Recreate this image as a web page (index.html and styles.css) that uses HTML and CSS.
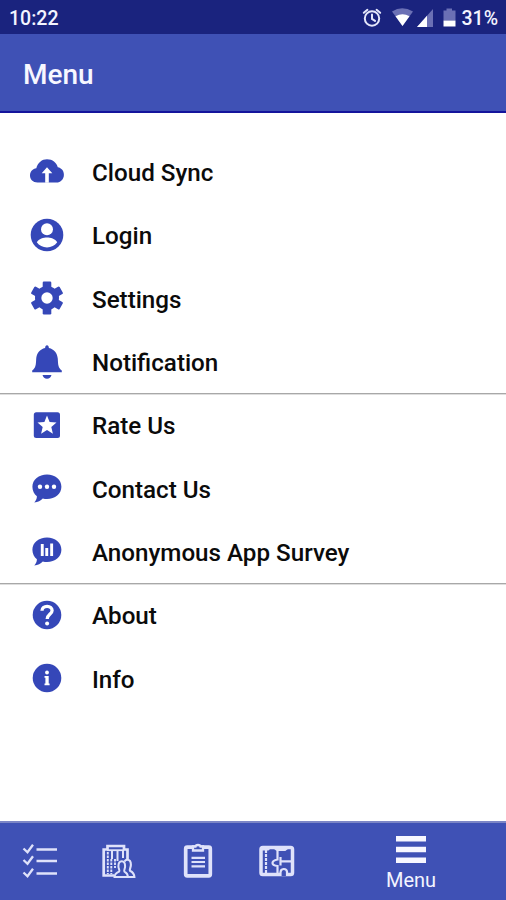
FILE: index.html
```html
<!DOCTYPE html>
<html lang="en">
<head>
    <meta charset="UTF-8">
    <meta name="viewport" content="width=device-width, initial-scale=1.0">
    <title>Menu</title>
    <link rel="stylesheet" href="styles.css">
</head>
<body>
    <!-- Status bar -->
    <div class="status-bar">
        <span class="time">10:22</span>
        <svg class="status-icons" width="96" height="34" viewBox="0 0 96 34">
            <g fill="none" stroke="#e4e6fa" stroke-width="2" stroke-linecap="round">
                <circle cx="12" cy="18.500" r="7.200"/>
                <path d="M3.800 12.800l3.600-3M20.200 12.800l-3.600-3M12 14.500v4.400l3 2"/>
            </g>
            <path d="M32 11.500q10-6.500 21 0L42.500 26z" fill="#6b70b5"/>
            <path d="M35.500 16.300q7-4 14 0L42.500 26z" fill="#fff"/>
            <path d="M73 9v18H57z" fill="#6b70b5"/>
            <path d="M67 15.800V27H57z" fill="#fff"/>
            <path d="M86.500 8.500h5.500v2h3.500v10h-12v-10h3z" fill="#6b70b5"/>
            <path d="M83.500 20.500h12V26.500h-12z" fill="#fff"/>
        </svg>
        <span class="battery">31%</span>
    </div>

    <div class="header">
        <h1>Menu</h1>
    </div>

    <!-- Menu entries -->
    <div class="menu">
        <ul class="menu-group">
            <li class="menu-item">
                <svg class="menu-icon" viewBox="0 0 40 40">
                    <path d="M10.500 30.500C6 30.500 3 27.500 3 23.500c0-4 2.800-6.700 6.300-7.200C10.700 10.500 15 7.200 20 7.200c5.600 0 9.500 3.300 10.800 8 3.800.6 6.100 3.700 6.100 7.500 0 4.500-3.200 7.800-7.500 7.800z"/>
                    <path class="cut" d="M20 15.200l5.300 6h-3.500v9.500h-3.600v-9.500h-3.500z"/>
                </svg>
                <span>Cloud Sync</span>
            </li>
            <li class="menu-item">
                <svg class="menu-icon" viewBox="0 0 40 40">
                    <circle cx="20" cy="20" r="16.300"/>
                    <circle class="cut" cx="20" cy="14.300" r="6"/>
                    <path class="cut" d="M9.800 27.300c2-3.400 6.800-4.700 10.200-4.700s8.200 1.300 10.200 4.700c-2.300 3.300-6 5.200-10.200 5.200s-7.900-1.900-10.200-5.200z"/>
                </svg>
                <span>Login</span>
            </li>
            <li class="menu-item">
                <svg class="menu-icon" viewBox="0 0 40 40">
                    <circle cx="20" cy="20" r="12"/>
                    <rect x="15.700" y="3.600" width="8.600" height="32.800" rx="1.200"/>
                    <rect x="15.700" y="3.600" width="8.600" height="32.800" rx="1.200" transform="rotate(60 20 20)"/>
                    <rect x="15.700" y="3.600" width="8.600" height="32.800" rx="1.200" transform="rotate(120 20 20)"/>
                    <circle class="cut" cx="20" cy="20" r="5.700"/>
                </svg>
                <span>Settings</span>
            </li>
            <li class="menu-item">
                <svg class="menu-icon" viewBox="0 0 40 40">
                    <path d="M20 3.300c1.200 0 1.700.8 1.900 2.600 5.200 1.200 8.600 5.400 8.900 10.900.3 6 .3 9 4 11.700v1.700H5.200v-1.700c3.700-2.700 3.700-5.700 4-11.700.3-5.500 3.700-9.700 8.900-10.900.2-1.800.7-2.600 1.900-2.600z"/>
                    <path d="M15.500 33h9c-.6 2.300-2.200 3.700-4.500 3.700s-3.900-1.400-4.500-3.700z"/>
                </svg>
                <span>Notification</span>
            </li>
        </ul>

        <ul class="menu-group">
            <li class="menu-item">
                <svg class="menu-icon" viewBox="0 0 40 40">
                    <rect x="6.800" y="7.300" width="26.200" height="25.700" rx="2.500"/>
                    <path class="cut" d="M20 10.500l2.600 6.400 6.900.6-5.200 4.500 1.600 6.700-5.900-3.600-5.900 3.600 1.600-6.700-5.200-4.500 6.900-.6z"/>
                </svg>
                <span>Rate Us</span>
            </li>
            <li class="menu-item">
                <svg class="menu-icon" viewBox="0 0 40 40">
                    <path d="M20 6.500c8.200 0 14.400 5.200 14.400 12.200S28.200 31 20 31c-1.600 0-2.900-.1-4.200-.5-2.200 2.200-4.800 3.600-8.500 4 1.700-1.900 2.600-3.700 2.600-6.200-2.700-2.300-4.500-5.600-4.500-9.600C5.400 11.700 11.800 6.500 20 6.500z"/>
                    <circle class="cut" cx="13" cy="18.800" r="2.200"/>
                    <circle class="cut" cx="20" cy="18.800" r="2.200"/>
                    <circle class="cut" cx="27" cy="18.800" r="2.200"/>
                </svg>
                <span>Contact Us</span>
            </li>
            <li class="menu-item">
                <svg class="menu-icon" viewBox="0 0 40 40">
                    <path d="M20 6.500c8.200 0 14.400 5.200 14.400 12.200S28.200 31 20 31c-1.600 0-2.900-.1-4.200-.5-2.200 2.200-4.800 3.600-8.500 4 1.700-1.900 2.600-3.700 2.600-6.200-2.700-2.300-4.500-5.600-4.500-9.600C5.400 11.700 11.800 6.500 20 6.500z"/>
                    <path class="cut" d="M13.800 13h2.900v12h-2.900zM18.300 17h2.900v8h-2.900zM23.200 12.500h2.900V25h-2.900z"/>
                </svg>
                <span>Anonymous App Survey</span>
            </li>
        </ul>

        <ul class="menu-group">
            <li class="menu-item">
                <svg class="menu-icon" viewBox="0 0 40 40">
                    <circle cx="20" cy="20" r="14.300"/>
                    <path d="M15 15.800c0-2.800 2.200-4.500 5.100-4.500s5 1.700 5 4.200c0 3.800-4.900 4-4.900 8.500" fill="none" stroke="#fff" stroke-width="3.300"/>
                    <circle class="cut" cx="20.100" cy="28.500" r="2"/>
                </svg>
                <span>About</span>
            </li>
            <li class="menu-item">
                <svg class="menu-icon" viewBox="0 0 40 40">
                    <circle cx="20" cy="20" r="14.300"/>
                    <circle class="cut" cx="20" cy="14.500" r="1.900"/>
                    <path class="cut" d="M17.500 18h4.200v7.500h.9v1.800h-5.100v-1.800h.9v-5.700h-.9z"/>
                </svg>
                <span>Info</span>
            </li>
        </ul>
    </div>

    <!-- Bottom navigation -->
    <div class="bottom-nav">
        <div class="nav-item">
            <svg class="nav-icon" viewBox="0 0 40 40">
                <path d="M3.500 6.500l4 3.800L13 2.800M3.500 18l4 3.800 5.500-7.500M3.500 30.500l4 3.800 5.500-7.500" stroke-width="2.300"/>
                <path d="M16.500 7.500h20.500M16.500 19h20.500M16.500 31.500h20.500" stroke-width="2.500"/>
            </svg>
        </div>
        <div class="nav-item">
            <svg class="nav-icon" viewBox="0 0 40 40">
                <path d="M15 33.500H4.700V7.500h3.800V4h16.500v3.500h3.500V17" stroke-width="2.700"/>
                <path d="M8 8.200h17" stroke-width="1.800"/>
                <path d="M8.800 10v22M12.300 17v15M16 17v9" stroke-width="1.900" stroke-dasharray="2.500 1"/>
                <path d="M13 9v8M18.500 9v10M24 9v7" stroke-width="2"/>
                <path d="M15.500 35c0-3.500 2.500-4.500 4.700-5.500.8-1.400-.8-2.700-.8-5.300 0-3 1.200-5 3.400-5s3.300 2 3.300 5c0 2.600-1.500 4-.7 5.400 1.500.8 3.200 1.300 3.600 5.400z" fill="#3f51b5" stroke-width="2"/>
                <path d="M25.500 19.500c.7-1.200 1.700-1.700 2.900-1.700 2.300 0 3.500 2 3.500 5 0 2.900-1.700 4.500-.9 6 2.300 1.200 4.200 2.200 4.400 6.200H29" stroke-width="2.100"/>
            </svg>
        </div>
        <div class="nav-item">
            <svg class="nav-icon" viewBox="0 0 40 40">
                <rect x="7.700" y="5.200" width="24.600" height="28.600" rx="1.500" stroke-width="3.700"/>
                <path d="M15 4.500h2.500c.5-2 4.500-2 5 0H25v4H15z" fill="#3f51b5" stroke-width="2.300"/>
                <path d="M13.500 15.800h13.500M13.500 20h13.500M13.500 24.300h13.500" stroke-width="2.200"/>
            </svg>
        </div>
        <div class="nav-item">
            <svg class="nav-icon" viewBox="0 0 40 40">
                <rect x="4" y="5.500" width="31.500" height="27" rx="1.800" stroke-width="3.500"/>
                <path d="M9 8v24" stroke-width="2.200" stroke-dasharray="3 1"/>
                <path d="M5 7.500h6l2-2M17.500 6l2.500 2h8l2.500-2M20.500 8v9.500q-5 1-5 3.500t5 3v8M23.500 15v8.500M23.500 19.300h11.500" stroke-width="2.200"/>
                <path d="M23.500 34v-3.500c0-4.500 6-4.500 6.500-.8V34" fill="#3f51b5" stroke-width="2.200"/>
            </svg>
        </div>
        <div class="nav-item active">
            <svg class="burger" viewBox="0 0 30 28">
                <path d="M0 0h30v5.500H0zM0 10.700h30v5.500H0zM0 21.500h30V27H0z"/>
            </svg>
            <span>Menu</span>
        </div>
    </div>
</body>
</html>
```

FILE: styles.css
```css
* {
    margin: 0;
    padding: 0;
    box-sizing: border-box;
}

body {
    font-family: Roboto, 'Liberation Sans', sans-serif;
    background: #fff;
    height: 100vh;
    display: flex;
    flex-direction: column;
    overflow: hidden;
}

/* Status bar */
.status-bar {
    height: 34px;
    flex: none;
    padding: 3px 8px 0 9px;
    background: #1a237e;
    color: #f3f4ff;
    display: flex;
    align-items: center;
    font-size: 19.5px;
    font-weight: 500;
    line-height: 31px;
}

.status-icons {
    margin-left: auto;
    margin-top: -3px;
}

.battery {
    margin-left: 5px;
}

.header {
    height: 79px;
    flex: none;
    padding: 4px 23px 0;
    background: #3f51b5;
    border-bottom: 2px solid #14149c;
    color: #f7f7ff;
    display: flex;
    align-items: center;
}

.header h1 {
    font-size: 28px;
    font-weight: 500;
}

/* Menu entries */
.menu {
    flex: 1;
    padding-top: 27px;
}

.menu-group {
    list-style: none;
}

.menu-group + .menu-group {
    background: linear-gradient(#a8a8a8 1px, #dedede 1px, #dedede 2px, transparent 2px);
}

.menu-item {
    height: 63.3px;
    padding-left: 27px;
    display: flex;
    align-items: center;
    gap: 25px;
    color: #0b0b0b;
    font-size: 24.2px;
    font-weight: 500;
}

.menu-item span {
    padding-top: 3px;
}

.menu-icon {
    width: 40px;
    height: 40px;
    fill: #3547b8;
}

.menu-icon .cut {
    fill: #fff;
}

/* Bottom navigation */
.bottom-nav {
    height: 79px;
    flex: none;
    background: #3f51b5;
    border-top: 2px solid #7c86c6;
    display: flex;
    align-items: center;
}

.nav-item {
    width: 79px;
    display: flex;
    justify-content: center;
}

.nav-icon {
    width: 40px;
    height: 40px;
    fill: none;
    stroke: #dfe2fa;
}

.nav-item.active {
    flex: 1;
    flex-direction: column;
    align-items: center;
    gap: 4px;
    padding-top: 4px;
    color: #f3f4ff;
    font-size: 20px;
}

.burger {
    width: 30px;
    height: 28px;
    fill: #f7f7ff;
}
```
